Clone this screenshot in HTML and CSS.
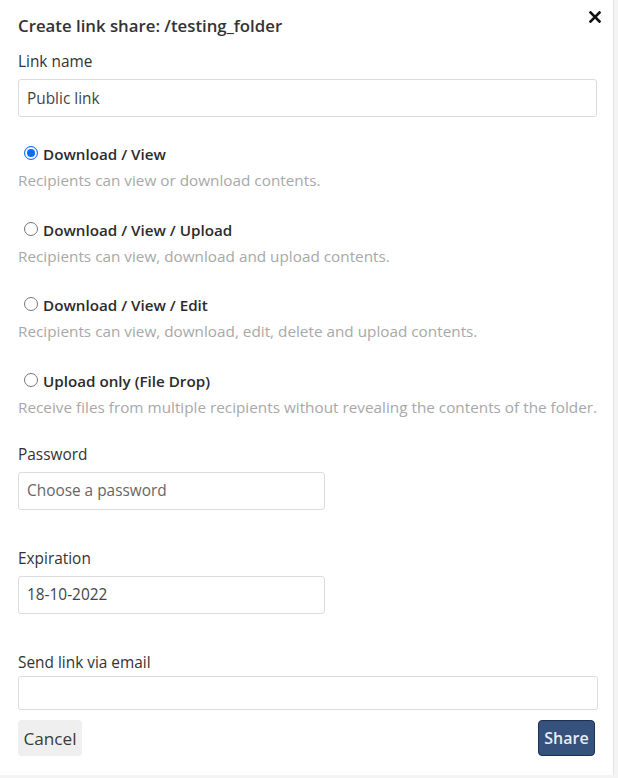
FILE: index.html
```html
<!DOCTYPE html>
<html>
<head>
<meta charset="utf-8">
<link rel="stylesheet" href="styles.css">
</head>
<body>
<div class="dialog">
  <div class="header">
    <h1 class="title">Create link share: /testing_folder</h1>
    <button class="close" aria-label="Close">
      <svg width="12" height="12" viewBox="0 0 12 12"><path d="M1.5 1.5 L10.5 10.5 M10.5 1.5 L1.5 10.5" stroke="#111" stroke-width="2.6" stroke-linecap="square" fill="none"/></svg>
    </button>
  </div>

  <label class="label first">Link name</label>
  <input class="field wide" type="text" value="Public link">

  <div class="options">
    <div class="option">
      <label class="opt-label"><input type="radio" name="perm" class="radio" checked><span>Download / View</span></label>
      <div class="desc">Recipients can view or download contents.</div>
    </div>
    <div class="option">
      <label class="opt-label"><input type="radio" name="perm" class="radio"><span>Download / View / Upload</span></label>
      <div class="desc">Recipients can view, download and upload contents.</div>
    </div>
    <div class="option">
      <label class="opt-label"><input type="radio" name="perm" class="radio"><span>Download / View / Edit</span></label>
      <div class="desc">Recipients can view, download, edit, delete and upload contents.</div>
    </div>
    <div class="option">
      <label class="opt-label"><input type="radio" name="perm" class="radio"><span>Upload only (File Drop)</span></label>
      <div class="desc">Receive files from multiple recipients without revealing the contents of the folder.</div>
    </div>
  </div>

  <label class="label pw">Password</label>
  <input class="field narrow" type="text" placeholder="Choose a password">

  <label class="label sect">Expiration</label>
  <input class="field narrow" type="text" value="18-10-2022">

  <label class="label sect">Send link via email</label>
  <input class="field wide email" type="text">

  <div class="actions">
    <button class="btn cancel">Cancel</button>
    <button class="btn share">Share</button>
  </div>
</div>
</body>
</html>
```

FILE: styles.css
```css
* { box-sizing: border-box; }
html, body { margin: 0; padding: 0; }
body {
  background: #f4f4f4;
  font-family: "Open Sans", "Noto Sans", sans-serif;
  color: #333;
}
.dialog {
  width: 614px;
  height: 775px;
  background: #fff;
  border-right: 1px solid #e4e4e4;
  padding: 16px 0 0 18px;
  display: flex;
  flex-direction: column;
  align-items: flex-start;
}
.header {
  width: 584px;
  display: flex;
  justify-content: space-between;
  align-items: flex-start;
}
.title {
  margin: 0;
  font-size: 16.8px;
  line-height: 20px;
  font-weight: 600;
  color: #333;
}
.close {
  border: 0;
  background: none;
  padding: 0;
  margin-top: -6px;
  width: 14px;
  height: 14px;
  display: flex;
  align-items: center;
  justify-content: center;
}
.label {
  display: block;
  font-size: 15.4px;
  line-height: 20px;
  color: #333;
}
.label.first { margin-top: 16px; }
.label.pw { margin-top: 28px; }
.label.sect { margin-top: 39px; }
.field {
  margin-top: 7px;
  height: 38px;
  border: 1px solid #dcdcdc;
  border-radius: 3px;
  padding: 0 8px;
  font-family: "Open Sans", "Noto Sans", sans-serif;
  font-size: 15.4px;
  color: #444;
  background: #fff;
  outline: none;
}
.field::placeholder { color: #666; }
.field.wide { width: 579px; }
.field.narrow { width: 307px; }
.field.email { width: 580px; height: 34px; margin-top: 3px; }
.options {
  margin-top: 27px;
  display: flex;
  flex-direction: column;
  gap: 29.5px;
}
.option { display: flex; flex-direction: column; gap: 6px; }
.opt-label {
  display: flex;
  align-items: center;
  font-size: 15.2px;
  line-height: 20px;
  font-weight: 600;
  color: #2b2b2b;
  padding-left: 6px;
}
.radio {
  appearance: none;
  -webkit-appearance: none;
  flex: none;
  width: 14px;
  height: 14px;
  margin: 0 5px 0 0;
  border: 1px solid #767676;
  border-radius: 50%;
  background: #fff;
  position: relative;
  top: -1px;
}
.radio:checked {
  border: 1.5px solid #0a6cff;
  box-shadow: inset 0 0 0 2px #fff, inset 0 0 0 7px #0a6cff;
}
.desc {
  font-size: 15.3px;
  line-height: 20px;
  color: #a8a8a8;
  white-space: nowrap;
}
.actions {
  margin-top: 10.5px;
  width: 577px;
  display: flex;
  justify-content: space-between;
}
.btn {
  height: 36px;
  border-radius: 4px;
  font-family: "Open Sans", "Noto Sans", sans-serif;
  padding: 0 2px;
}
.cancel {
  width: 64px;
  background: #efefef;
  border: 0;
  color: #3a3a3a;
  font-size: 17.2px;
}
.share {
  width: 57px;
  background: #35517c;
  border: 1px solid #1d3154;
  color: #e6edf5;
  font-weight: 600;
  font-size: 16px;
}
```
